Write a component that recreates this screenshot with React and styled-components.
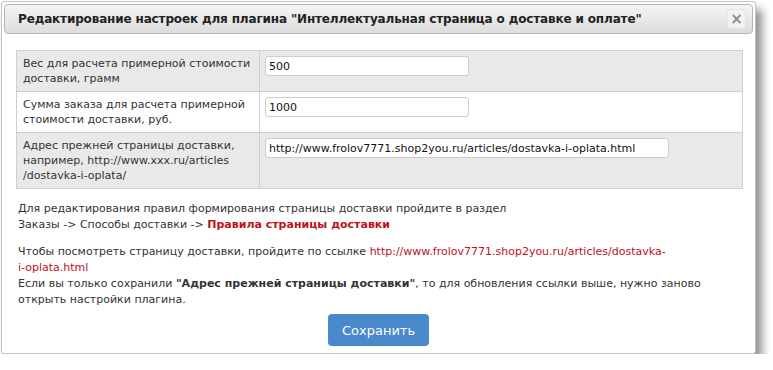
import styled, { createGlobalStyle } from "styled-components";

const GlobalStyle = createGlobalStyle`
  body {
    margin: 0;
    background: #fff;
    font-family: "DejaVu Sans", Verdana, sans-serif;
  }
`;

const Page = styled.div`
  padding: 1px 0 0 1px;
`;

const Dialog = styled.div`
  width: 755px;
  height: 353px;
  box-sizing: border-box;
  background: #fff;
  border: 1px solid #c4c4c4;
  border-radius: 3px;
  padding: 2px 2px 0 2px;
  box-shadow: 6px 8px 10px rgba(0, 0, 0, 0.45);
`;

const TitleBar = styled.div`
  display: flex;
  align-items: center;
  justify-content: space-between;
  height: 30px;
  box-sizing: border-box;
  padding: 0 6px 0 13px;
  border: 1px solid #b5b5b5;
  border-radius: 4px;
  background: linear-gradient(#f4f4f4, #dddddd);
`;

const Title = styled.span`
  font-size: 12px;
  font-weight: bold;
  letter-spacing: -0.15px;
  color: #222;
`;

const CloseButton = styled.button`
  width: 19px;
  height: 20px;
  padding: 0;
  border: 1px solid #e4e4e4;
  border-radius: 3px;
  background: #f1f1f1;
  color: #8a8a8a;
  font-size: 15px;
  font-weight: bold;
  line-height: 16px;
  font-family: "DejaVu Sans", sans-serif;
`;

const Body = styled.div`
  padding: 16px 12px 0 12px;
  color: #333;
  font-size: 11px;
`;

const Table = styled.table`
  width: 727px;
  border-collapse: collapse;
`;

const Row = styled.tr`
  background: ${(p) => (p.$odd ? "#e9e9e9" : "#fff")};
`;

const Label = styled.td`
  width: 231px;
  border: 1px solid #cfcfcf;
  padding: 5px 5px 5px 6px;
  vertical-align: top;
  line-height: 15px;
`;

const Cell = styled.td`
  border: 1px solid #cfcfcf;
  padding: 5px 5px 0 5px;
  vertical-align: top;
`;

const Input = styled.input`
  display: block;
  width: ${(p) => p.$w}px;
  height: 20px;
  box-sizing: border-box;
  border: 1px solid #ccc;
  border-radius: 3px;
  padding: 0 3px;
  font-family: "DejaVu Sans", Verdana, sans-serif;
  font-size: 11px;
  color: #111;
  background: #fff;
`;

const Note = styled.p`
  margin: ${(p) => p.$top}px 0 0 0;
  line-height: 16px;
  padding: 0 14px 0 2px;
`;

const Danger = styled.b`
  color: #c0101a;
`;

const Link = styled.a`
  color: #c0101a;
  text-decoration: none;
`;

const Footer = styled.div`
  display: flex;
  justify-content: center;
  padding-top: 6px;
`;

const SaveButton = styled.button`
  width: 101px;
  height: 32px;
  border: none;
  border-radius: 4px;
  background: #4a89cc;
  color: #fff;
  font-family: "DejaVu Sans", Verdana, sans-serif;
  font-size: 13px;
`;

export default function App() {
  return (
    <Page>
      <GlobalStyle />
      <Dialog>
        <TitleBar>
          <Title>
            Редактирование настроек для плагина "Интеллектуальная страница о
            доставке и оплате"
          </Title>
          <CloseButton>×</CloseButton>
        </TitleBar>
        <Body>
          <Table>
            <tbody>
              <Row $odd>
                <Label>Вес для расчета примерной стоимости доставки, грамм</Label>
                <Cell>
                  <Input $w={204} defaultValue="500" />
                </Cell>
              </Row>
              <Row>
                <Label>
                  Сумма заказа для расчета примерной стоимости доставки, руб.
                </Label>
                <Cell>
                  <Input $w={204} defaultValue="1000" />
                </Cell>
              </Row>
              <Row $odd>
                <Label>
                  Адрес прежней страницы доставки, например,
                  http://www.xxx.ru/articles /dostavka-i-oplata/
                </Label>
                <Cell>
                  <Input
                    $w={404}
                    defaultValue="http://www.frolov7771.shop2you.ru/articles/dostavka-i-oplata.html"
                  />
                </Cell>
              </Row>
            </tbody>
          </Table>
          <Note $top={12}>
            Для редактирования правил формирования страницы доставки пройдите в
            раздел
            <br />
            Заказы -&gt; Способы доставки -&gt;{" "}
            <Danger>Правила страницы доставки</Danger>
          </Note>
          <Note $top={11}>
            Чтобы посмотреть страницу доставки, пройдите по ссылке{" "}
            <Link href="#">
              http://www.frolov7771.shop2you.ru/articles/dostavka-
              <br />
              i-oplata.html
            </Link>
            <br />
            Если вы только сохранили <b>"Адрес прежней страницы доставки"</b>,
            то для обновления ссылки выше, нужно заново открыть настройки
            плагина.
          </Note>
          <Footer>
            <SaveButton>Сохранить</SaveButton>
          </Footer>
        </Body>
      </Dialog>
    </Page>
  );
}
